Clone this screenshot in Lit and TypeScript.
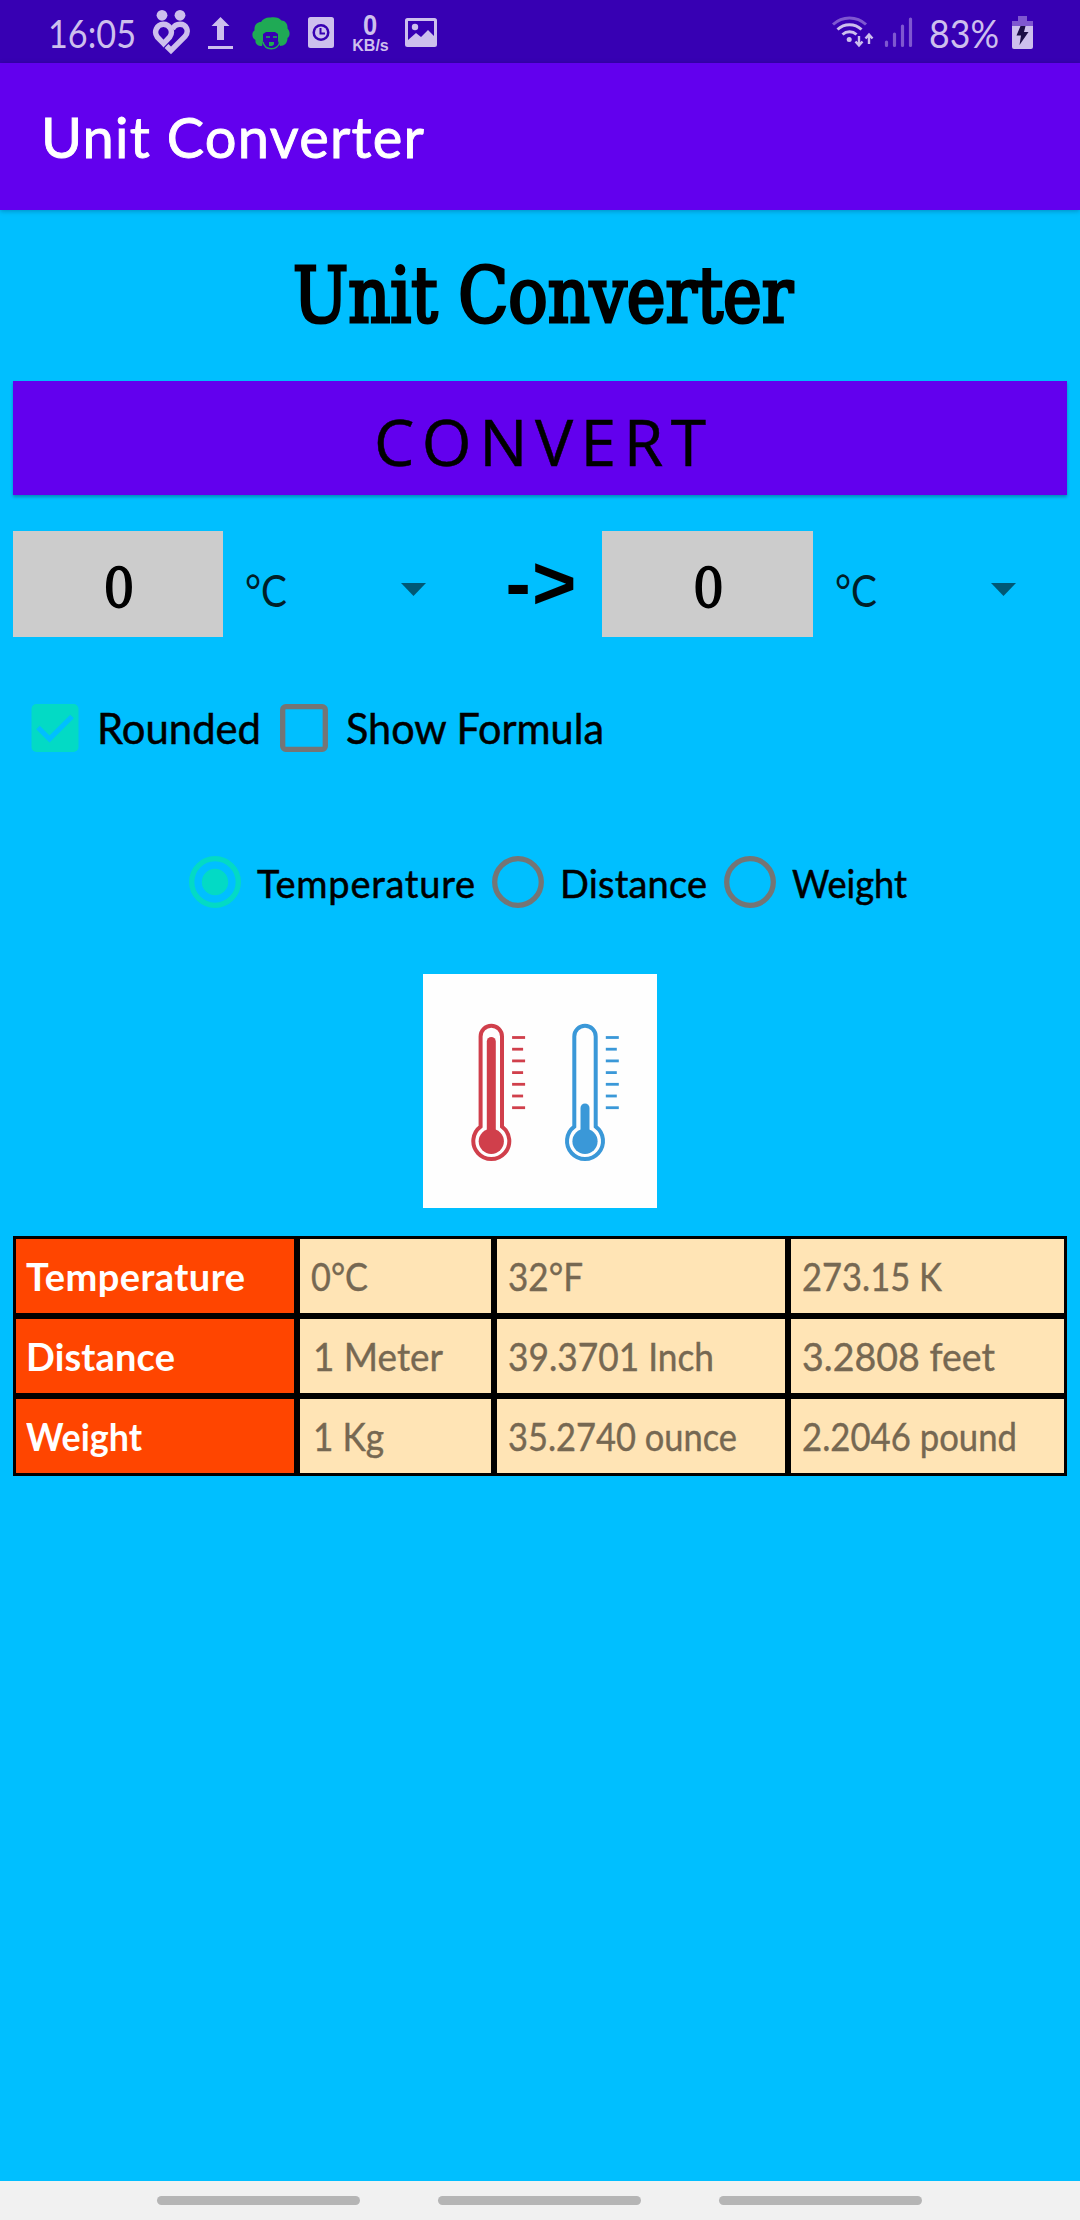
import { LitElement, html, css, svg } from "lit";
import { customElement, property } from "lit/decorators.js";

/**
 * A line of text that fills a given width in pixels: short runs are tracked
 * out, long runs are condensed.
 */
@customElement("fit-label")
class FitLabel extends LitElement {
  @property({ type: String }) text = "";
  @property({ type: Number }) width = 0;

  static styles = css`
    :host { display: block; white-space: pre; flex: none; }
    .run { display: inline-block; transform-origin: 0 50%; }
  `;

  render() {
    return html`<span class="run">${this.text}</span>`;
  }

  updated() {
    const run = this.renderRoot.querySelector(".run") as HTMLElement;
    this.style.width = `${this.width}px`;
    run.style.letterSpacing = "0px";
    run.style.transform = "none";
    const natural = run.getBoundingClientRect().width;
    const gaps = Math.max(1, this.text.length - 1);
    if (natural > this.width) {
      run.style.transform = `scaleX(${(this.width / natural).toFixed(4)})`;
    } else {
      run.style.letterSpacing = `${((this.width - natural) / gaps).toFixed(3)}px`;
    }
  }
}

interface Cell { text: string; width: number; indent?: boolean }

const ROWS: { name: string; width: number; cells: Cell[] }[] = [
  {
    name: "Temperature", width: 219,
    cells: [
      { text: "0°C", width: 57 },
      { text: "32°F", width: 75 },
      { text: "273.15 K", width: 140 },
    ],
  },
  {
    name: "Distance", width: 149,
    cells: [
      { text: "1 Meter", width: 130, indent: true },
      { text: "39.3701 Inch", width: 206 },
      { text: "3.2808 feet", width: 193 },
    ],
  },
  {
    name: "Weight", width: 116,
    cells: [
      { text: "1 Kg", width: 71, indent: true },
      { text: "35.2740 ounce", width: 229 },
      { text: "2.2046 pound", width: 215 },
    ],
  },
];

const RADIOS = [
  { text: "Temperature", width: 218, checked: true },
  { text: "Distance", width: 147, checked: false },
  { text: "Weight", width: 115, checked: false },
];

const TICKS = [0, 1, 2, 3, 4, 5, 6];

const thermometer = (x: number, color: string, level: number) => svg`
  <g transform="translate(${x} 0)" fill="none" stroke=${color}>
    <path stroke-width="4" d="M-10.7 152.6V62.5a10.7 10.7 0 0 1 21.4 0v90.1a18 18 0 1 1-21.4 0z"/>
    <path stroke-width="9" stroke-linecap="round" d="M0 ${level}V160"/>
    <circle r="12.6" cy="167.3" fill=${color} stroke="none"/>
    ${TICKS.map((i) => svg`<path stroke-width="2.8" d="M20.8 ${63.5 + i * 11.7}h${i % 2 ? 11 : 13}"/>`)}
  </g>`;

@customElement("app-root")
class AppRoot extends LitElement {
  static styles = css`
    :host {
      display: flex;
      flex-direction: column;
      box-sizing: border-box;
      width: 1080px;
      height: 2220px;
      overflow: hidden;
      background: #00bfff;
      color: #000;
      font-family: Lato, "Open Sans", sans-serif;
    }
    svg { display: block; flex: none; }

    .status {
      display: flex;
      flex: none;
      height: 63px;
      padding: 0 46px 0 48px;
      background: #3700b3;
      color: #cdbfed;
      font-size: 38px;
      line-height: 67px;
    }
    .status svg { fill: #cdbfed; }
    .g14 { margin-left: 14px; }
    .g16 { margin-left: 16px; }
    .g18 { margin-left: 18px; }
    .g10 { margin-left: 10px; }
    .g12 { margin-left: 12px; }
    .right { margin-left: auto; }
    .speed {
      display: flex;
      flex-direction: column;
      align-items: center;
      width: 41px;
      margin-left: 16px;
      padding-top: 12px;
      box-sizing: border-box;
      font-family: "Liberation Sans", sans-serif;
      font-weight: bold;
    }
    .speed-n { font-size: 29px; line-height: 27px; transform: scaleX(0.88); }
    .speed-u { font-size: 16px; line-height: 13px; }

    .appbar {
      flex: none;
      height: 147px;
      padding-left: 41px;
      background: #6200ee;
      color: #fff;
      font-size: 56px;
      line-height: 148px;
      -webkit-text-stroke: 0.9px #fff;
      box-shadow: 0 1px 5px rgba(0, 0, 0, 0.25);
    }

    .body {
      display: flex;
      flex: 1;
      flex-direction: column;
      padding: 0 13px;
    }
    .title {
      display: flex;
      justify-content: center;
      height: 171px;
      padding-left: 5px;
      font: 76px/171px "DejaVu Serif Condensed", "DejaVu Serif", serif;
      font-stretch: condensed;
      -webkit-text-stroke: 3px #000;
    }
    .convert {
      display: flex;
      justify-content: center;
      height: 114px;
      background: #6200ee;
      font: 64px/122px "Open Sans", sans-serif;
      -webkit-text-stroke: 0.5px #000;
      box-shadow: 0 2px 3px rgba(0, 0, 0, 0.28);
    }

    .inputs {
      display: flex;
      height: 106px;
      margin-top: 36px;
    }
    .value {
      width: 210px;
      background: #ccc;
      box-sizing: border-box;
      padding-left: 2px;
      font: 54px/115px "DejaVu Serif Condensed", "DejaVu Serif", serif;
      font-stretch: condensed;
      text-align: center;
      -webkit-text-stroke: 1.5px #000;
    }
    .value.second { width: 211px; }
    .unit {
      display: flex;
      justify-content: space-between;
      box-sizing: border-box;
      width: 203px;
      padding-left: 22px;
      color: #001f29;
      font-size: 44px;
      line-height: 118px;
    }
    .unit svg { margin-top: 52px; fill: #005875; }
    .arrow {
      display: flex;
      justify-content: center;
      box-sizing: border-box;
      width: 176px;
      padding-left: 54px;
      font: bold 76px/104px "Liberation Sans", sans-serif;
    }

    .checks {
      display: flex;
      height: 48px;
      margin-top: 67px;
      padding-left: 18px;
      font-size: 43px;
      line-height: 48px;
      -webkit-text-stroke: 0.5px #000;
    }
    .check-text { margin-left: 18px; margin-right: 19px; }

    .radios {
      display: flex;
      height: 52px;
      margin-top: 104px;
      padding-left: 176px;
      font-size: 38px;
      line-height: 54px;
      -webkit-text-stroke: 0.5px #000;
    }
    .radio { display: flex; }
    .radio-text { margin: 0 17px 0 16px; }

    .picture { align-self: center; margin-top: 66px; }

    .table {
      display: grid;
      grid-template-columns: 284px 197px 294px 279px;
      grid-auto-rows: 80px;
      margin-top: 28px;
      font-size: 38px;
      line-height: 75px;
    }
    .cell {
      padding-left: 11px;
      border: 3px solid #000;
      background: #ffe4b5;
      color: #766852;
      -webkit-text-stroke: 0.4px #766852;
    }
    .cell.head {
      padding-left: 10px;
      background: #ff4500;
      color: #fff;
      font-weight: bold;
      -webkit-text-stroke: 0;
    }
    .cell.indent { padding-left: 13px; }

    .nav {
      display: flex;
      flex: none;
      gap: 78px;
      height: 39px;
      box-sizing: border-box;
      padding: 15px 0 0 157px;
      background: #f1f1f1;
    }
    .pill { width: 203px; height: 9px; border-radius: 5px; background: #b5b5b5; }
  `;

  private statusBar() {
    return html`
      <div class="status">
        <fit-label text="16:05" width="88"></fit-label>
        <svg class="g16" width="38" height="63" viewBox="152 0 38 63">
          <circle cx="162" cy="15.3" r="5.4"/><circle cx="180" cy="15.3" r="5.4"/>
          <g fill="none" stroke="#cdbfed" stroke-width="5.4">
            <path d="M163.5 43.5l-6.300-6.600a8 8 0 0 1 6-12.700a8 8 0 0 1 6.600 12.700z"/>
            <path d="M172.500 29c1.500-3 4.500-4.800 7.500-4.800c6.500 0 9.500 7 5 12.300L171 50.500l-4.500-4.500"/>
          </g>
        </svg>
        <svg class="g18" width="26" height="63" viewBox="209 0 26 63">
          <path d="M221.500 17l9 9h-5.500v14h-7V26h-5.500zM209 46h25v3h-25z"/>
        </svg>
        <svg class="g18" width="38" height="63" viewBox="252 0 38 63">
          <path fill="#1faa55" d="M262 46c-5 0-7-3-6.500-6c-4-2-4-8-1-9.500c-.5-6 3-8.500 6.500-8.500c2-3.500 6-5 9.500-4.500c4-1 9 0 11 3c4 0 6.500 4 6 8c3 3 2.500 8 0 9.500c0 5-3 8-7.500 8l-2-5v-7l-3-2h-9l-3 2v7z"/>
          <path fill="none" stroke="#1faa55" stroke-width="1.300" d="M263 42c2 9 14 9 17 0M266 37h4M273 37h4"/>
          <path fill="#1faa55" d="M269 42h5v2.500l-2 1.500h-3z"/>
        </svg>
        <svg class="g18" width="26" height="63" viewBox="308 0 26 63">
          <path fill-rule="evenodd" d="M310.500 17h21a2.500 2.500 0 0 1 2.500 2.500v26a2.500 2.500 0 0 1-2.500 2.500h-21a2.500 2.500 0 0 1-2.500-2.500v-26a2.500 2.500 0 0 1 2.500-2.500zM321 24a8.500 8.500 0 1 0 0 17a8.500 8.500 0 1 0 0-17z"/>
          <circle cx="321" cy="32.500" r="6"/>
          <path fill="none" stroke="#3700b3" stroke-width="2" d="M320.500 28v5.500h4.500"/>
        </svg>
        <div class="speed"><span class="speed-n">0</span><span class="speed-u">KB/s</span></div>
        <svg class="g14" width="32" height="63" viewBox="405 0 32 63">
          <path fill-rule="evenodd" d="M407.500 18h27a2.500 2.500 0 0 1 2.500 2.500v24a2.500 2.500 0 0 1-2.500 2.500h-27a2.500 2.500 0 0 1-2.500-2.500v-24a2.500 2.500 0 0 1 2.500-2.500zM408 21v19l8-7l5 4l7-7l6 6V21z"/>
          <circle cx="415" cy="27" r="3.200"/>
        </svg>

        <svg class="right" width="42" height="63" viewBox="832 0 42 63">
          <g fill="none" stroke="#cdbfed" stroke-width="3">
            <path stroke="#7f57d0" d="M833 24.500a24 24 0 0 1 33 0"/>
            <path d="M837.500 29.500a17.500 17.500 0 0 1 24 0M842.500 34.500a10.500 10.500 0 0 1 14 0"/>
            <path stroke-width="2.400" d="M859 36v9M855.500 41.500l3.500 4l3.500-4M869 44v-9M865.500 38.500l3.500-4l3.500 4"/>
          </g>
          <circle cx="849.200" cy="39.500" r="2.500"/>
        </svg>
        <svg class="g10" width="29" height="63" viewBox="884 0 29 63">
          <path fill="none" stroke="#7f57d0" stroke-width="3.200" stroke-linecap="round" d="M886.500 42v3.500M894.500 34v11.500M902.500 26v19.500M910.500 19v26.500"/>
        </svg>
        <fit-label class="g16" text="83%" width="70"></fit-label>
        <svg class="g12" width="23" height="63" viewBox="1011 0 23 63">
          <path fill="#7f57d0" d="M1018 16h9v5h6v5h-21v-5h6z"/>
          <path d="M1012 26h21v21a2 2 0 0 1-2 2h-17a2 2 0 0 1-2-2z"/>
          <path fill="#1b0d45" d="M1020.500 26h5l-1.500 6h4.500l-9 13l1.500-9.500h-4.500z"/>
        </svg>
      </div>`;
  }

  private unit() {
    return html`
      <div class="unit">
        <fit-label text="°C" width="42"></fit-label>
        <svg width="25" height="13" viewBox="0 0 25 13"><path d="M0 0h25L12.500 13z"/></svg>
      </div>`;
  }

  private radio(checked: boolean) {
    return html`
      <svg width="52" height="52" viewBox="0 0 52 52">
        <circle cx="26" cy="26" r="23.300" fill="none" stroke-width="5.300" stroke=${checked ? "#03dac5" : "#757575"}/>
        ${checked ? svg`<circle cx="26" cy="26" r="13.200" fill="#03dac5"/>` : null}
      </svg>`;
  }

  render() {
    return html`
      ${this.statusBar()}
      <div class="appbar"><fit-label text="Unit Converter" width="383"></fit-label></div>
      <div class="body">
        <div class="title"><fit-label text="Unit Converter" width="500"></fit-label></div>
        <div class="convert"><fit-label text="CONVERT" width="332"></fit-label></div>
        <div class="inputs">
          <div class="value">0</div>
          ${this.unit()}
          <div class="arrow"><fit-label text="-&gt;" width="71"></fit-label></div>
          <div class="value second">0</div>
          ${this.unit()}
        </div>
        <div class="checks">
          <svg width="48" height="48" viewBox="0 0 48 48">
            <rect x=".5" width="47" height="48" rx="5" fill="#03dac5"/>
            <path d="M7 23.500l11.500 11.500L41 12.500" fill="none" stroke="#00bfff" stroke-width="5"/>
          </svg>
          <fit-label class="check-text" text="Rounded" width="164"></fit-label>
          <svg width="48" height="48" viewBox="0 0 48 48">
            <rect x="2.700" y="2.700" width="42.600" height="42.600" rx="3" fill="none" stroke="#757575" stroke-width="5.300"/>
          </svg>
          <fit-label class="check-text" text="Show Formula" width="258"></fit-label>
        </div>
        <div class="radios">
          ${RADIOS.map((r) => html`
            <div class="radio">
              ${this.radio(r.checked)}
              <fit-label class="radio-text" .text=${r.text} .width=${r.width}></fit-label>
            </div>`)}
        </div>
        <svg class="picture" width="234" height="234" viewBox="0 0 234 234">
          <rect width="234" height="234" fill="#fefefe"/>
          ${thermometer(68.300, "#d03f4b", 67.500)}
          ${thermometer(162, "#3a98d8", 134)}
        </svg>
        <div class="table">
          ${ROWS.map((row) => html`
            <div class="cell head"><fit-label .text=${row.name} .width=${row.width}></fit-label></div>
            ${row.cells.map((c) => html`
              <div class="cell ${c.indent ? "indent" : ""}">
                <fit-label .text=${c.text} .width=${c.width}></fit-label>
              </div>`)}`)}
        </div>
      </div>
      <div class="nav"><div class="pill"></div><div class="pill"></div><div class="pill"></div></div>
    `;
  }
}
